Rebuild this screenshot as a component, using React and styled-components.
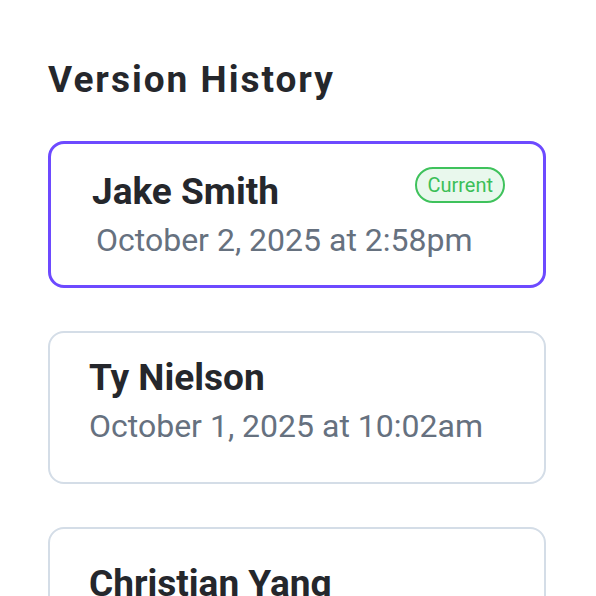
import React from 'react';
import styled, { createGlobalStyle } from 'styled-components';

const versions = [
  { name: 'Jake Smith', date: 'October 2, 2025 at 2:58pm', current: true, pad: '26px 38px 25px 41px' },
  { name: 'Ty Nielson', date: 'October 1, 2025 at 10:02am', pad: '23px 38px 36px 39px' },
  { name: 'Christian Yang', date: 'September 30, 2025 at 4:15pm', pad: '33px 38px 36px 39px' },
];

const GlobalStyle = createGlobalStyle`
  html, body {
    margin: 0;
    padding: 0;
    background: #ffffff;
    font-family: Roboto, "Liberation Sans", sans-serif;
    overflow: hidden;
  }
`;

export default function App() {
  return (
    <Page>
      <GlobalStyle />
      <Title>Version History</Title>
      <List>
        {versions.map((v) => (
          <Card key={v.name} active={v.current ? 1 : 0} pad={v.pad}>
            <Head>
              <Name>{v.name}</Name>
              {v.current && <Badge>Current</Badge>}
            </Head>
            <DateText active={v.current ? 1 : 0}>{v.date}</DateText>
          </Card>
        ))}
      </List>
    </Page>
  );
}

const Page = styled.div`
  padding: 58px 50px 0 48px;
`;

const Title = styled.h1`
  margin: 0 0 39px;
  font-size: 37px;
  line-height: 44px;
  font-weight: 700;
  letter-spacing: 2px;
  color: #25272c;
`;

const List = styled.div`
  display: flex;
  flex-direction: column;
  gap: 43px;
`;

const Card = styled.div`
  border: ${(p) => (p.active ? '3px solid #6d4aff' : '2px solid #d4dde7')};
  border-radius: 16px;
  padding: ${(p) => p.pad};
`;

const Head = styled.div`
  display: flex;
  justify-content: space-between;
  align-items: flex-start;
`;

const Name = styled.div`
  font-size: 37px;
  line-height: 44px;
  font-weight: 700;
  color: #25272c;
  white-space: nowrap;
`;

const Badge = styled.span`
  margin-top: -3px;
  padding: 4px 10px;
  border: 2px solid #3fc25c;
  border-radius: 999px;
  background: #e9f8ed;
  color: #3cbf58;
  font-size: 20px;
  line-height: 24px;
`;

const DateText = styled.div`
  margin-top: 6px;
  padding-left: ${(p) => (p.active ? '4px' : '0')};
  font-size: 32px;
  line-height: 40px;
  color: #66717f;
  white-space: nowrap;
`;
